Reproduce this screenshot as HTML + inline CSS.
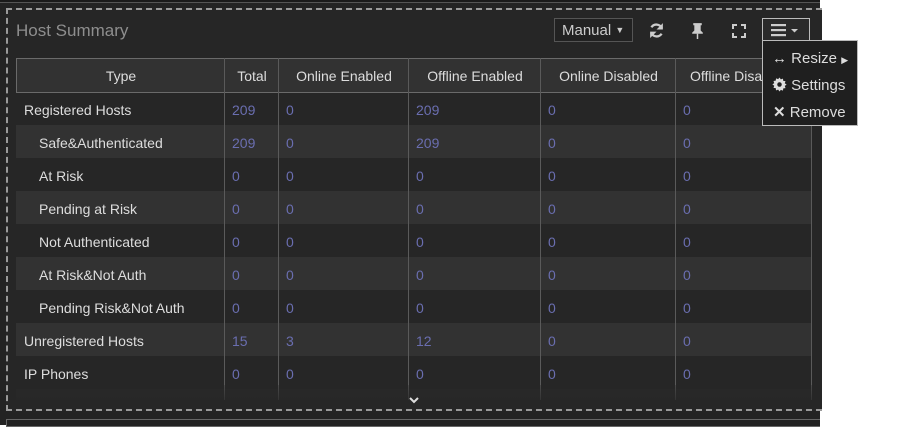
<!DOCTYPE html>
<html><head><style>
*{margin:0;padding:0;box-sizing:border-box}
body{width:905px;height:425px;background:#fff;position:relative;overflow:hidden;font-family:"Liberation Sans",sans-serif;font-size:14px;color:#ddd}
.bg{position:absolute;left:0;top:0;width:820px;height:425px;background:#232323}
.topline{position:absolute;left:0;top:0;width:820px;height:3px;background:#1a1a1a;border-bottom:1px solid #555}
.panel{position:absolute;left:6px;top:8px;width:816px;height:403px;border:2px dashed #9a9a9a;border-right:none;background:#262626}
.title{position:absolute;left:16px;top:21px;font-size:17px;color:#8e8e8e}
.tbl{position:absolute;left:16px;top:58px;width:796px;height:342px;overflow:hidden}
.row{position:absolute;left:0;width:796px;height:33px}
.cell{position:absolute;top:1px;height:33px;line-height:33px;font-size:14px;white-space:nowrap}
.n{color:#6a6eb0}
.hdr{background:#323232;border:1px solid #6a6a6a;height:35px;top:0}
.hdr .cell{text-align:center;line-height:34px;color:#ddd;top:0}
.vl{position:absolute;top:0;width:1px;height:342px;background:#5a5a5a}
.fade{position:absolute;left:16px;top:385px;width:796px;height:24px;background:linear-gradient(rgba(38,38,38,0.3),#262626)}
.btn{position:absolute;top:18px;height:24px;border:1px solid #555;background:#222;color:#ccc;font-size:14px;line-height:22px;padding:0 7px;white-space:nowrap}
.menu{position:absolute;left:762px;top:40px;width:96px;height:86px;background:#1f1f1f;border:1px solid #bbb;font-size:15px;color:#ddd}
.menu div{position:absolute;left:10px;height:20px;line-height:20px;white-space:nowrap}
.bot{position:absolute;left:6px;top:419px;width:814px;height:8px;border:1px solid #666;border-right:none;background:#222}
</style></head><body>
<div class="bg"></div>
<div class="topline"></div>
<div class="panel"></div>
<div class="title">Host Summary</div>

<div class="tbl">
 <div class="row" style="top:34px;background:#262626"></div>
 <div class="row" style="top:67px;background:#323232"></div>
 <div class="row" style="top:100px;background:#262626"></div>
 <div class="row" style="top:133px;background:#323232"></div>
 <div class="row" style="top:166px;background:#262626"></div>
 <div class="row" style="top:199px;background:#323232"></div>
 <div class="row" style="top:232px;background:#262626"></div>
 <div class="row" style="top:265px;background:#323232"></div>
 <div class="row" style="top:298px;background:#262626"></div>
 <div class="row" style="top:331px;background:#2a2a2a"></div>
 <div class="row hdr">
  <div class="cell" style="left:0;width:208px">Type</div>
  <div class="cell" style="left:208px;width:54px">Total</div>
  <div class="cell" style="left:262px;width:130px">Online Enabled</div>
  <div class="cell" style="left:392px;width:132px">Offline Enabled</div>
  <div class="cell" style="left:524px;width:135px">Online Disabled</div>
  <div class="cell" style="left:659px;width:137px;text-align:left;padding-left:14px">Offline Disabled</div>
 </div>
 <div class="vl" style="left:208px"></div><div class="vl" style="left:262px"></div><div class="vl" style="left:392px"></div><div class="vl" style="left:524px"></div><div class="vl" style="left:659px"></div><div class="vl" style="left:795px"></div>
 <div class="vl" style="left:0;height:35px;background:#6a6a6a"></div>

 <div class="row" style="top:35px"><div class="cell" style="left:8px">Registered Hosts</div><div class="cell n" style="left:216px">209</div><div class="cell n" style="left:270px">0</div><div class="cell n" style="left:400px">209</div><div class="cell n" style="left:532px">0</div><div class="cell n" style="left:667px">0</div></div>
 <div class="row" style="top:68px"><div class="cell" style="left:23px">Safe&amp;Authenticated</div><div class="cell n" style="left:216px">209</div><div class="cell n" style="left:270px">0</div><div class="cell n" style="left:400px">209</div><div class="cell n" style="left:532px">0</div><div class="cell n" style="left:667px">0</div></div>
 <div class="row" style="top:101px"><div class="cell" style="left:23px">At Risk</div><div class="cell n" style="left:216px">0</div><div class="cell n" style="left:270px">0</div><div class="cell n" style="left:400px">0</div><div class="cell n" style="left:532px">0</div><div class="cell n" style="left:667px">0</div></div>
 <div class="row" style="top:134px"><div class="cell" style="left:23px">Pending at Risk</div><div class="cell n" style="left:216px">0</div><div class="cell n" style="left:270px">0</div><div class="cell n" style="left:400px">0</div><div class="cell n" style="left:532px">0</div><div class="cell n" style="left:667px">0</div></div>
 <div class="row" style="top:167px"><div class="cell" style="left:23px">Not Authenticated</div><div class="cell n" style="left:216px">0</div><div class="cell n" style="left:270px">0</div><div class="cell n" style="left:400px">0</div><div class="cell n" style="left:532px">0</div><div class="cell n" style="left:667px">0</div></div>
 <div class="row" style="top:200px"><div class="cell" style="left:23px">At Risk&amp;Not Auth</div><div class="cell n" style="left:216px">0</div><div class="cell n" style="left:270px">0</div><div class="cell n" style="left:400px">0</div><div class="cell n" style="left:532px">0</div><div class="cell n" style="left:667px">0</div></div>
 <div class="row" style="top:233px"><div class="cell" style="left:23px">Pending Risk&amp;Not Auth</div><div class="cell n" style="left:216px">0</div><div class="cell n" style="left:270px">0</div><div class="cell n" style="left:400px">0</div><div class="cell n" style="left:532px">0</div><div class="cell n" style="left:667px">0</div></div>
 <div class="row" style="top:266px"><div class="cell" style="left:8px">Unregistered Hosts</div><div class="cell n" style="left:216px">15</div><div class="cell n" style="left:270px">3</div><div class="cell n" style="left:400px">12</div><div class="cell n" style="left:532px">0</div><div class="cell n" style="left:667px">0</div></div>
 <div class="row" style="top:299px"><div class="cell" style="left:8px">IP Phones</div><div class="cell n" style="left:216px">0</div><div class="cell n" style="left:270px">0</div><div class="cell n" style="left:400px">0</div><div class="cell n" style="left:532px">0</div><div class="cell n" style="left:667px">0</div></div>
 <div class="row" style="top:332px;opacity:.3"><div class="cell" style="left:8px">Total</div><div class="cell n" style="left:216px">224</div><div class="cell n" style="left:270px">3</div><div class="cell n" style="left:400px">221</div><div class="cell n" style="left:532px">0</div><div class="cell n" style="left:667px">0</div></div>
</div>
<div class="fade"></div>
<svg style="position:absolute;left:408px;top:396px" width="12" height="9"><path d="M2 2 L6 6 L10 2" stroke="#ddd" stroke-width="2" fill="none"/></svg>

<div class="btn" style="left:554px;width:79px;font-size:15px">Manual <span style="font-size:9px;vertical-align:2px">&#9660;</span></div>
<svg style="position:absolute;left:648px;top:22px" width="17" height="17" viewBox="0 0 16 16"><path d="M13 6A5.5 5.5 0 0 0 3.2 5M3 10a5.5 5.5 0 0 0 9.8 1" stroke="#ccc" stroke-width="2.2" fill="none"/><path d="M14 1v6h-6z M2 15V9h6z" fill="#ccc"/></svg>
<svg style="position:absolute;left:690px;top:22px" width="15" height="17" viewBox="0 0 14 16"><path d="M3 1h8v2h-1v5l2 2v1H2v-1l2-2V3H3z" fill="#ccc"/><rect x="6.3" y="11" width="1.4" height="5" fill="#ccc"/></svg>
<svg style="position:absolute;left:732px;top:24px" width="14" height="14" viewBox="0 0 14 14"><path d="M1 5V1h4M9 1h4v4M13 9v4H9M5 13H1V9" stroke="#ccc" stroke-width="2" fill="none"/></svg>
<div class="btn" style="left:762px;width:48px;height:25px;border-color:#bbb;background:#2a2a2a;border-bottom:none"></div>
<svg style="position:absolute;left:771px;top:23px" width="32" height="14"><rect x="0" y="1" width="15" height="2.2" fill="#ccc"/><rect x="0" y="6" width="15" height="2.2" fill="#ccc"/><rect x="0" y="11" width="15" height="2.2" fill="#ccc"/><path d="M20 6h7l-3.5 3.5z" fill="#ccc"/></svg>
<div class="menu">
 <div style="top:8px;left:9px">&#8596; Resize <span style="font-size:9px">&#9654;</span></div>
 <div style="top:35px;left:9px"><svg width="15" height="15" viewBox="0 0 16 16" style="vertical-align:-2px"><path d="M8 0.5l1.4 2 2.3-.8.3 2.4 2.4.3-.8 2.3 2 1.4-2 1.4.8 2.3-2.4.3-.3 2.4-2.3-.8L8 15.5l-1.4-2-2.3.8-.3-2.4-2.4-.3.8-2.3-2-1.4 2-1.4-.8-2.3 2.4-.3.3-2.4 2.3.8z" fill="#ddd"/><circle cx="8" cy="8" r="2.4" fill="#1f1f1f"/></svg> Settings</div>
 <div style="top:62px;left:10px"><b>&#10005;</b> Remove</div>
</div>
<div class="bot"></div>
</body></html>
